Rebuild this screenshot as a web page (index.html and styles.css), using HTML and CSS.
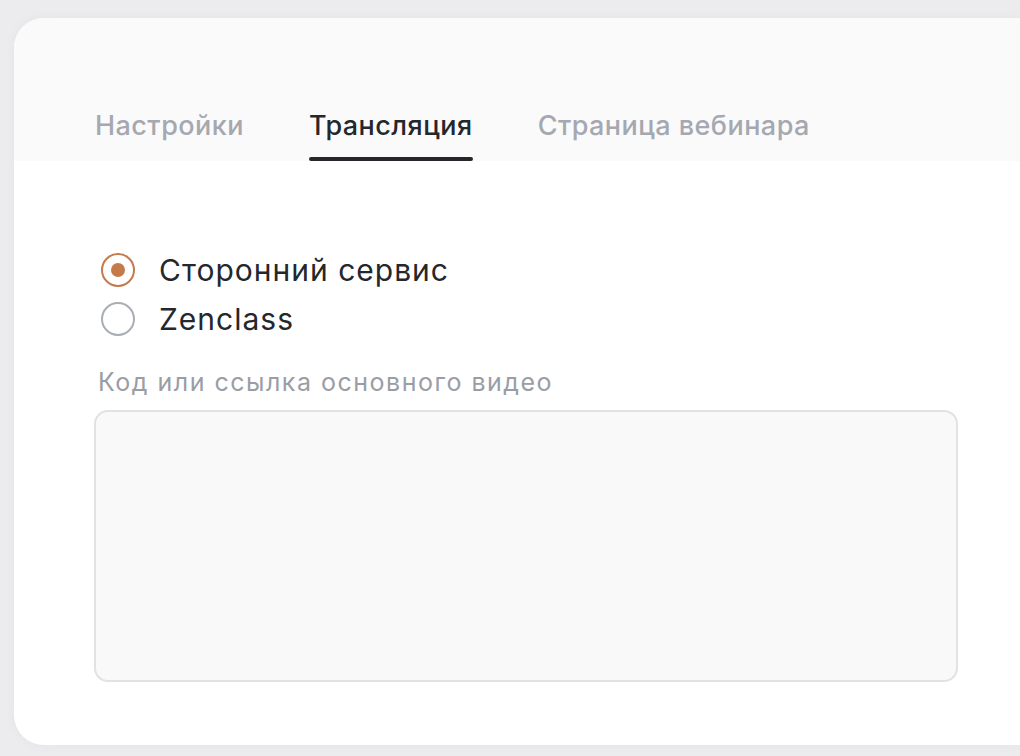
FILE: index.html
```html
<!DOCTYPE html>
<html lang="ru">
<head>
  <meta charset="UTF-8">
  <meta name="viewport" content="width=device-width, initial-scale=1.0">
  <title>Вебинар — трансляция</title>
  <link rel="stylesheet" href="styles.css">
</head>
<body>
  <div class="card">
    <div class="tabs">
      <a href="#" class="tab">Настройки</a>
      <a href="#" class="tab active">Трансляция</a>
      <a href="#" class="tab">Страница вебинара</a>
    </div>
    <div class="content">
      <div class="radios">
        <label class="radio">
          <input type="radio" name="source" checked>
          <span class="mark"></span>
          Сторонний сервис
        </label>
        <label class="radio">
          <input type="radio" name="source">
          <span class="mark"></span>
          Zenclass
        </label>
      </div>
      <div class="field">
        <div class="field-label">Код или ссылка основного видео</div>
        <textarea class="field-input"></textarea>
      </div>
    </div>
  </div>
</body>
</html>
```
FILE: styles.css
```css
body {
  margin: 0;
  background-color: #ececee;
  font-family: 'Inter', 'Noto Sans', sans-serif;
  height: 756px;
  overflow: hidden;
}
.card {
  margin: 18px 0 0 14px;
  height: 727px;
  background: #fff;
  border-radius: 30px 0 0 30px;
  box-shadow: 0 0 12px rgba(0, 0, 0, 0.04);
  overflow: hidden;
}
.tabs {
  display: flex;
  gap: 65px;
  height: 143px;
  padding-left: 81px;
  background: #fafafa;
  align-items: flex-end;
}
.tab {
  position: relative;
  font-size: 27px;
  line-height: 33px;
  font-weight: 500;
  color: #a5a8b0;
  text-decoration: none;
  padding-bottom: 19px;
  letter-spacing: 0.45px;
}
.tab.active {
  color: #24272c;
}
.tab.active::after {
  content: '';
  position: absolute;
  left: 0;
  right: 0;
  bottom: 0;
  height: 4px;
  border-radius: 2px;
  background: #24272c;
}
.content {
  padding: 91px 62px 0 80px;
}
.radios {
  display: flex;
  flex-direction: column;
  gap: 13px;
}
.radio {
  display: flex;
  align-items: center;
  gap: 24px;
  font-size: 30px;
  letter-spacing: 1px;
  color: #24272c;
  height: 36px;
  padding-left: 7px;
}
.radio input {
  display: none;
}
.mark {
  width: 34px;
  height: 34px;
  box-sizing: border-box;
  border: 2px solid #a9adb4;
  border-radius: 50%;
  display: flex;
  align-items: center;
  justify-content: center;
}
.radio input:checked + .mark {
  border-color: #c57a4a;
}
.radio input:checked + .mark::after {
  content: '';
  width: 14px;
  height: 14px;
  border-radius: 50%;
  background: #c57a4a;
}
.field {
  margin-top: 31px;
}
.field-label {
  font-size: 25px;
  line-height: 29px;
  letter-spacing: 1.5px;
  color: #9a9da4;
  padding-left: 4px;
  margin-bottom: 13px;
}
.field-input {
  display: block;
  width: 100%;
  height: 272px;
  box-sizing: border-box;
  background: #f9f9f9;
  border: 2px solid #e2e2e2;
  border-radius: 14px;
  resize: none;
}
```
